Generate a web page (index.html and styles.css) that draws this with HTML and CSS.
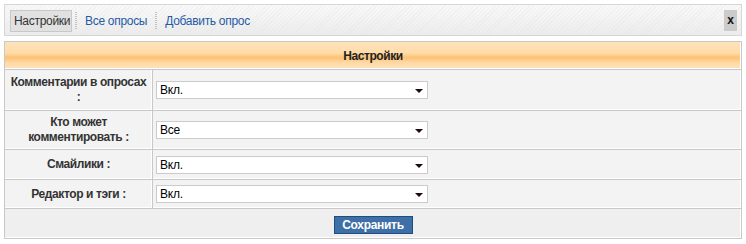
FILE: index.html
```html
<!DOCTYPE html>
<html lang="ru">
<head>
<meta charset="utf-8">
<title>Настройки опросов</title>
<link rel="stylesheet" href="styles.css">
</head>
<body>
<div class="topbar">
  <span class="tab active">Настройки</span>
  <span class="sep"></span>
  <a class="tab link" href="#">Все опросы</a>
  <span class="sep"></span>
  <a class="tab link" href="#">Добавить опрос</a>
  <span class="close">x</span>
</div>

<table class="settings">
  <thead>
    <tr><th colspan="2" class="head">Настройки</th></tr>
  </thead>
  <tbody>
    <tr class="r1">
      <td class="label">Комментарии в опросах<br>:</td>
      <td class="value"><span class="sel"><select><option>Вкл.</option></select><i class="arrow"></i></span></td>
    </tr>
    <tr class="r2">
      <td class="label">Кто может<br>комментировать :</td>
      <td class="value"><span class="sel"><select><option>Все</option></select><i class="arrow"></i></span></td>
    </tr>
    <tr class="r3">
      <td class="label">Смайлики :</td>
      <td class="value"><span class="sel"><select><option>Вкл.</option></select><i class="arrow"></i></span></td>
    </tr>
    <tr class="r4">
      <td class="label">Редактор и тэги :</td>
      <td class="value"><span class="sel"><select><option>Вкл.</option></select><i class="arrow"></i></span></td>
    </tr>
    <tr class="foot">
      <td colspan="2"><button class="save">Сохранить</button></td>
    </tr>
  </tbody>
</table>
</body>
</html>
```
FILE: styles.css
```css
html, body {
  margin: 0;
  background: #fff;
}
body {
  padding: 4px;
  font-family: "Liberation Sans", Arial, sans-serif;
  font-size: 12px;
  color: #222;
}
.topbar {
  display: flex;
  align-items: center;
  width: 738px;
  box-sizing: border-box;
  height: 32px;
  padding: 1px 4px 0 5px;
  border: 1px solid #d6d6d6;
  background:
    repeating-linear-gradient(135deg, rgba(255,255,255,0) 0 2px, rgba(220,220,220,0.25) 2px 3px),
    linear-gradient(#f9f9f9, #f3f3f3 50%, #ececec);
}
.tab {
  display: block;
  height: 22px;
  line-height: 22px;
  box-sizing: border-box;
  font-size: 12px;
  letter-spacing: -0.3px;
  text-decoration: none;
}
.tab.active {
  background: #e1e1e1;
  border: 1px solid #c8c8c8;
  line-height: 20px;
  padding: 0 3px;
  color: #333;
  width: 62px;
}
.tab.link {
  color: #1f5ca6;
  padding: 0 5px;
}
.sep {
  display: block;
  width: 2px;
  height: 18px;
  margin: 0 3px;
  background: repeating-linear-gradient(#c4c4c4 0 1px, transparent 1px 2px);
}
.close {
  margin-left: auto;
  width: 13px;
  height: 21px;
  line-height: 21px;
  text-align: center;
  background: #cbcbcb;
  font-weight: bold;
  color: #111;
  font-size: 12px;
}
.settings {
  margin-top: 5px;
  width: 738px;
  border-collapse: collapse;
  border: 1px solid #bdbdbd;
}
.settings td, .settings th {
  border: 1px solid #c8c8c8;
  padding: 0;
  box-shadow: inset -1px -1px 0 #fff;
}
.head {
  height: 27px;
  font-weight: bold;
  font-size: 12px;
  letter-spacing: -0.4px;
  color: #222;
  background: linear-gradient(#ffe2b8, #ffdba8 40%, #fcc170 55%, #ffd9a6 75%, #ffe3bc);
}
.label {
  width: 147px;
  text-align: center;
  font-weight: bold;
  font-size: 12px;
  letter-spacing: -0.4px;
  line-height: 15px;
  color: #333;
  background: #f3f3f3;
}
.value {
  background: #f3f3f3;
  padding-left: 3px !important;
}
.r1 td { height: 40px; }
.r2 td { height: 38px; }
.r3 td { height: 29px; }
.r4 td { height: 28px; }
.sel {
  position: relative;
  display: block;
  width: 272px;
  height: 18px;
}
.sel select {
  appearance: none;
  -webkit-appearance: none;
  display: block;
  width: 272px;
  height: 18px;
  margin: 0;
  box-sizing: border-box;
  border: 1px solid #cbcbcb;
  border-radius: 0;
  background: #fff;
  font-family: "Liberation Sans", Arial, sans-serif;
  font-size: 12px;
  letter-spacing: -0.2px;
  color: #000;
  padding: 0 0 0 3px;
  outline: none;
}
.arrow {
  position: absolute;
  right: 5px;
  top: 8px;
  width: 0;
  height: 0;
  border-left: 4px solid transparent;
  border-right: 4px solid transparent;
  border-top: 4px solid #1a0a14;
}
.foot td {
  height: 29px;
  text-align: center;
  background: #efefef;
}
.save {
  width: 79px;
  height: 18px;
  margin-top: 2px;
  padding: 0;
  border: 1px solid #1e4e80;
  background: #3e6fa6;
  color: #fff;
  font-family: "Liberation Sans", Arial, sans-serif;
  font-weight: bold;
  font-size: 12px;
  letter-spacing: -0.3px;
  line-height: 16px;
}
```
